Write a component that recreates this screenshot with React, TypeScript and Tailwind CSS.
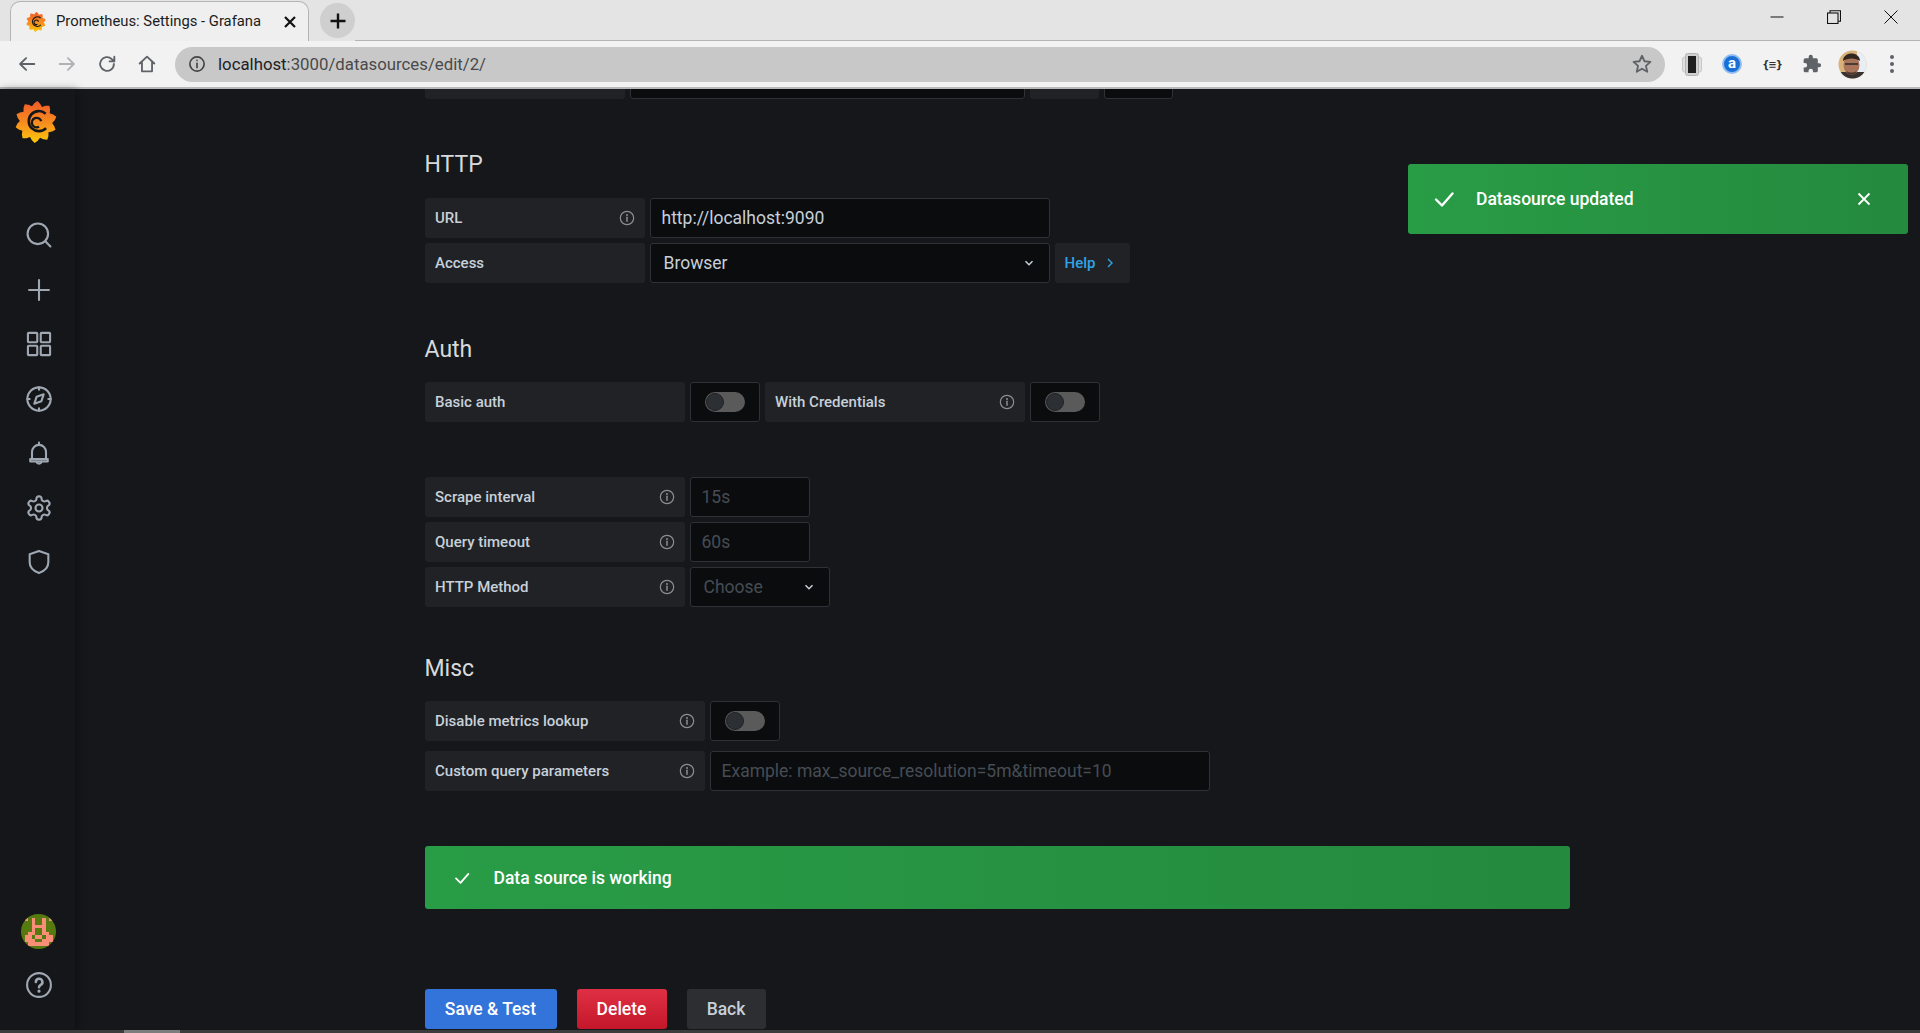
import React from "react";

const roboto = "font-['Roboto',sans-serif]";

function Logo({ size, id }: { size: number; id: string }) {
  const pts: string[] = [];
  const n = 10;
  for (let i = 0; i < n * 4; i++) {
    const a = (i / (n * 4)) * Math.PI * 2 - 0.25;
    const phase = i % 4;
    const r = phase === 0 ? 24 : phase === 1 || phase === 3 ? 21.5 : 18.5;
    pts.push(`${(24 + r * Math.cos(a)).toFixed(2)},${(24 + r * Math.sin(a)).toFixed(2)}`);
  }
  return (
    <svg width={size} height={size} viewBox="0 0 48 48">
      <defs>
        <linearGradient id={id} x1="0" y1="0" x2="0" y2="1">
          <stop offset="0" stopColor="#f05a28" />
          <stop offset="0.55" stopColor="#f7901e" />
          <stop offset="1" stopColor="#fbca0a" />
        </linearGradient>
      </defs>
      <polygon points={pts.join(" ")} fill={`url(#${id})`} />
      <path d="M35 14.5A11.5 11.5 0 1 0 35.5 31" fill="none" stroke="#141619" strokeWidth="3" />
      <path d="M30 23A5.5 5.5 0 1 0 27.5 29.5" fill="none" stroke="#141619" strokeWidth="2.6" />
    </svg>
  );
}

function Info() {
  return (
    <svg width="16" height="16" viewBox="0 0 24 24" fill="none" stroke="#8e8e8e" strokeWidth="1.8" strokeLinecap="round">
      <circle cx="12" cy="12" r="10" />
      <path d="M12 11v6" strokeWidth="2.2" />
      <circle cx="12" cy="7.5" r="0.6" fill="#8e8e8e" />
    </svg>
  );
}

function Chevron() {
  return (
    <svg width="12" height="12" viewBox="0 0 12 12" fill="none" stroke="#c7d0d9" strokeWidth="1.5">
      <path d="M2.5 4.2 6 7.7l3.5-3.5" />
    </svg>
  );
}

function Label({ text, info = true, w }: { text: string; info?: boolean; w: string }) {
  return (
    <div className={`${w} h-10 shrink-0 rounded-[3px] bg-[#202226] pl-[10.5px] pr-2.5 flex items-center justify-between text-[15px] font-medium text-[#c7d0d9]`}>
      <span>{text}</span>
      {info && <Info />}
    </div>
  );
}

function Box({ w, text, placeholder }: { w: string; text?: string; placeholder?: boolean }) {
  return (
    <div className={`${w} h-10 rounded-[3px] border border-[#2c3235] bg-[#0b0c0e] pl-[11px] flex items-center text-[17.5px] ${placeholder ? "text-[#464c54]" : "text-[#c7d0d9]"}`}>
      {text}
    </div>
  );
}

function Toggle() {
  return (
    <div className="w-[70px] h-10 rounded-[3px] border border-[#2c3235] bg-[#0b0c0e] flex items-center justify-center">
      <div className="w-10 h-5 rounded-full bg-[#5a5a5a] flex items-center">
        <div className="w-[18px] h-[18px] ml-px rounded-full bg-[#2c2f33] border border-[#202226]" />
      </div>
    </div>
  );
}

function Heading({ children, cls }: { children: React.ReactNode; cls: string }) {
  return <h3 className={`text-[23px] leading-[26px] font-normal text-[#d8d9da] ${cls}`}>{children}</h3>;
}

function Check({ size }: { size: number }) {
  return (
    <svg width={size} height={size} viewBox="0 0 24 24" fill="none" stroke="#fff" strokeWidth="2.4" strokeLinecap="round" strokeLinejoin="round">
      <path d="M4 12.5 10 18.5 20.5 6.5" />
    </svg>
  );
}

function NavIcons() {
  const common = { width: 28, height: 28, viewBox: "0 0 24 24", fill: "none", stroke: "#9fa7b3", strokeWidth: 1.8, strokeLinecap: "round" as const, strokeLinejoin: "round" as const };
  return (
    <div className="flex flex-col items-center gap-[26.5px] ml-[3px]">
      <svg {...common}><circle cx="11" cy="11" r="8.8" /><path d="m17.6 17.6 4.2 4.2" /></svg>
      <svg {...common}><path d="M12 3.5v17M3.5 12h17" /></svg>
      <svg {...common}><rect x="2.5" y="2.5" width="8" height="8" rx="0.6" /><rect x="13.5" y="2.5" width="8" height="8" rx="0.6" /><rect x="2.5" y="13.5" width="8" height="8" rx="0.6" /><rect x="13.5" y="13.5" width="8" height="8" rx="0.6" /></svg>
      <svg {...common}><circle cx="12" cy="12" r="10" /><path d="M16 8l-2 6-6 2 2-6z" /><path d="M12 2v2M12 20v2M2 12h2M20 12h2" /></svg>
      <svg {...common}><path d="M6 17V11a6 6 0 0 1 12 0v6" /><path d="M4.5 17.2h15v2h-15z" /><path d="M12 3v2" /><path d="M9.8 19.5a2.3 2.3 0 0 0 4.4 0" /></svg>
      <svg {...common}><path d="M12.22 2h-.44a2 2 0 0 0-2 2v.18a2 2 0 0 1-1 1.73l-.43.25a2 2 0 0 1-2 0l-.15-.08a2 2 0 0 0-2.73.73l-.22.38a2 2 0 0 0 .73 2.73l.15.1a2 2 0 0 1 1 1.72v.51a2 2 0 0 1-1 1.74l-.15.09a2 2 0 0 0-.73 2.73l.22.38a2 2 0 0 0 2.73.73l.15-.08a2 2 0 0 1 2 0l.43.25a2 2 0 0 1 1 1.73V20a2 2 0 0 0 2 2h.44a2 2 0 0 0 2-2v-.18a2 2 0 0 1 1-1.73l.43-.25a2 2 0 0 1 2 0l.15.08a2 2 0 0 0 2.73-.73l.22-.39a2 2 0 0 0-.73-2.73l-.15-.08a2 2 0 0 1-1-1.74v-.5a2 2 0 0 1 1-1.74l.15-.09a2 2 0 0 0 .73-2.73l-.22-.38a2 2 0 0 0-2.73-.73l-.15.08a2 2 0 0 1-2 0l-.43-.25a2 2 0 0 1-1-1.73V4a2 2 0 0 0-2-2z" /><circle cx="12" cy="12" r="3" /></svg>
      <svg {...common}><path d="M12 2.5l8 2.8v7c0 4.5-3 7.5-8 9.2-5-1.7-8-4.7-8-9.2v-7z" /></svg>
    </div>
  );
}

function Identicon() {
  const cells: [number, number[]][] = [
    [1, [1, 3, 6, 8]],
    [2, [3, 6]],
    [3, [3, 4, 5, 6]],
    [4, [3, 6]],
    [5, [2, 3, 6, 7]],
    [6, [1, 2, 4, 5, 7, 8]],
    [7, [1, 2, 3, 6, 7, 8]],
    [8, [2, 3, 4, 5, 6, 7]],
  ];
  return (
    <svg width="35" height="35" viewBox="0 0 10 10" className="rounded-full bg-[#567a10]" shapeRendering="crispEdges">
      {cells.map(([y, xs]) =>
        xs.map((x) => <rect key={`${x}-${y}`} x={x} y={y} width="1" height="1" fill="#f98e78" />)
      )}
    </svg>
  );
}

function ChromeIcon({ children }: { children: React.ReactNode }) {
  return (
    <svg width="22" height="22" viewBox="0 0 24 24" fill="none" stroke="#5f6368" strokeWidth="2" strokeLinecap="round" strokeLinejoin="round">
      {children}
    </svg>
  );
}

function Cell({ children }: { children: React.ReactNode }) {
  return <div className="w-10 h-[30px] flex items-center justify-center">{children}</div>;
}

export default function App() {
  return (
    <div className={`h-screen w-full flex flex-col overflow-hidden bg-[#141619] relative ${roboto}`}>
      {/* tab strip */}
      <div className="h-[41px] shrink-0 bg-[#e4e4e4] flex items-end relative">
        <div className="ml-[10px] w-[299px] h-10 bg-[#efefef] border border-b-0 border-[#b4b4b4] rounded-t-[10px] flex items-center pl-[15px] text-[#1c1c1c]">
          <Logo size={20} id="g-fav" />
          <span className="ml-[10px] w-[217px] whitespace-nowrap text-[14.8px]">Prometheus: Settings - Grafana</span>
          <svg width="14" height="14" viewBox="0 0 14 14" stroke="#111" strokeWidth="2.2" className="ml-[10px]"><path d="M2 2l10 10M12 2 2 12" /></svg>
        </div>
        <div className="ml-[11px] mb-[3px] w-[35px] h-[35px] rounded-full bg-[#cfcfcf] flex items-center justify-center">
          <svg width="18" height="18" viewBox="0 0 18 18" stroke="#111" strokeWidth="2.4"><path d="M9 1.5v15M1.5 9h15" /></svg>
        </div>
        <div className="flex-1 h-px bg-[#b4b4b4]" />
        <div className="absolute top-0 right-0 h-[34px] flex items-center pr-[22px] gap-[43px]">
          <svg width="14" height="14" viewBox="0 0 14 14" stroke="#111" strokeWidth="1"><path d="M0.5 7h13" /></svg>
          <svg width="14" height="14" viewBox="0 0 14 14" fill="none" stroke="#111" strokeWidth="1.1"><rect x="0.5" y="3" width="10.5" height="10.5" /><path d="M3 3V0.7h10.5v10.5H11" /></svg>
          <svg width="14" height="14" viewBox="0 0 14 14" stroke="#111" strokeWidth="1"><path d="M0.5 0.5l13 13M13.5 0.5l-13 13" /></svg>
        </div>
      </div>
      {/* toolbar */}
      <div className="h-[48px] shrink-0 bg-[#f2f2f2] border-b-2 border-[#b9b9b9] flex items-center">
        <div className="flex items-center ml-[16px] gap-[18px]">
          <ChromeIcon><path d="M20 12H5M11 5.5 4.5 12l6.5 6.5" /></ChromeIcon>
          <ChromeIcon><g stroke="#b0b2b5"><path d="M4 12h15M13 5.5l6.5 6.5-6.5 6.5" /></g></ChromeIcon>
          <ChromeIcon><path d="M19.5 12a7.5 7.5 0 1 1-2.3-5.4L20 9.2M20 4v5.2h-5.2" /></ChromeIcon>
          <ChromeIcon><path d="M4 11.5 12 4l8 7.5M6.5 10v10h11V10" /></ChromeIcon>
        </div>
        <div className="ml-[17px] w-[1490px] h-[35px] rounded-full bg-[#c8c8c8] flex items-center pl-[13px] pr-[12px]">
          <svg width="18" height="18" viewBox="0 0 24 24" fill="none" stroke="#444" strokeWidth="2.2" strokeLinecap="round"><circle cx="12" cy="12" r="9.5" /><path d="M12 11v6" /><path d="M12 7.2v.2" /></svg>
          <span className="ml-[12px] pt-[2px] text-[16.8px] text-[#202124] flex-1">
            localhost<span className="text-[#4a4a4a]">:3000/datasources/edit/2/</span>
          </span>
          <svg width="22" height="22" viewBox="0 0 24 24" fill="none" stroke="#5f6368" strokeWidth="2" strokeLinejoin="round"><path d="m12 3 2.7 6 6.5.7-4.9 4.4 1.4 6.4-5.7-3.3-5.7 3.3 1.4-6.4-4.9-4.4 6.5-.7z" /></svg>
        </div>
        <div className="flex items-center ml-[7px]">
          <Cell>
            <svg width="20" height="23" viewBox="0 0 20 23"><rect x="0.5" y="4" width="19" height="15" rx="2" fill="#e0e0e0" stroke="#c8c8c8" /><rect x="3.5" y="0.5" width="13" height="22" rx="2" fill="#d0d0d0" stroke="#b5b5b5" /><rect x="6" y="3" width="8" height="17" fill="#202020" /></svg>
          </Cell>
          <Cell>
            <div className="w-5 h-5 rounded-full bg-[#1a6fd6] border-2 border-[#8fbdf0] flex items-center justify-center text-white text-[15px] font-bold leading-none pb-[2px]">a</div>
          </Cell>
          <Cell>
            <span className="text-[10px] font-bold text-[#333] font-['DejaVu_Sans',sans-serif] tracking-[-1px]">{"{≡}"}</span>
          </Cell>
          <Cell>
            <svg width="20" height="20" viewBox="0 0 24 24" fill="#5f6368"><path d="M20.5 11H19V7a2 2 0 0 0-2-2h-4V3.5a2.5 2.5 0 0 0-5 0V5H4a2 2 0 0 0-2 2v3.8h1.5a2.7 2.7 0 0 1 0 5.4H2V20a2 2 0 0 0 2 2h3.8v-1.5a2.7 2.7 0 0 1 5.4 0V22H17a2 2 0 0 0 2-2v-4h1.5a2.5 2.5 0 0 0 0-5z" /></svg>
          </Cell>
          <Cell>
            <svg width="29" height="29" viewBox="0 0 29 29">
              <clipPath id="av"><circle cx="14.5" cy="14.5" r="14" /></clipPath>
              <g clipPath="url(#av)">
                <rect width="29" height="29" fill="#d9b27a" />
                <rect x="19" width="10" height="22" fill="#e8eef5" />
                <rect y="22" width="29" height="7" fill="#3a3230" />
                <ellipse cx="13.5" cy="15" rx="8" ry="10" fill="#a8745a" />
                <path d="M5 11C5 1 22 1 22 11 18 7.5 9 7.5 5 11z" fill="#33261e" />
                <path d="M7 14h13" stroke="#2a2a2a" strokeWidth="1.5" />
                <path d="M8.5 21c3 2 7 2 10 0-1 5-9 5-10 0z" fill="#4a3528" />
              </g>
            </svg>
          </Cell>
          <Cell>
            <svg width="6" height="20" viewBox="0 0 6 20" fill="#5f6368"><circle cx="3" cy="3" r="2" /><circle cx="3" cy="10" r="2" /><circle cx="3" cy="17" r="2" /></svg>
          </Cell>
        </div>
      </div>

      {/* body */}
      <div className="flex-1 min-h-0 flex">
        <aside className="w-[75px] shrink-0 bg-[#141619] shadow-[2px_0_8px_rgba(0,0,0,0.35)] flex flex-col items-center relative z-10">
          <div className="mt-[12px] -ml-[4px]"><Logo size={42} id="g-main" /></div>
          <div className="mt-[78px]"><NavIcons /></div>
          <div className="mt-auto mb-[34px] flex flex-col items-center gap-[22.5px] ml-[1px]">
            <Identicon />
            <svg width="28" height="28" viewBox="0 0 24 24" fill="none" stroke="#9fa7b3" strokeWidth="1.8" strokeLinecap="round" className="ml-[1px]">
              <circle cx="12" cy="12" r="10.2" />
              <path d="M9.3 9.5a2.8 2.8 0 1 1 4.2 2.4c-1 .6-1.5 1.1-1.5 2.1" strokeWidth="2.2" />
              <path d="M12 17.2v.1" strokeWidth="2.6" />
            </svg>
          </div>
        </aside>
        <main className="flex-1 min-w-0 overflow-hidden bg-[#15171b] pl-[349.5px] flex flex-col text-[#c7d0d9]">
          <div className="h-[10px] overflow-hidden flex items-end gap-[5px] shrink-0">
            <div className="w-[200px] h-10 rounded-[3px] bg-[#202226]" />
            <div className="w-[395px] h-10 rounded-[3px] border border-[#2c3235] bg-[#0b0c0e]" />
            <div className="w-[69px] h-10 rounded-[3px] bg-[#202226]" />
            <div className="w-[69px] h-10 rounded-[3px] border border-[#2c3235] bg-[#0b0c0e]" />
          </div>

          <Heading cls="mt-[53px]">HTTP</Heading>
          <div className="mt-[20px] flex gap-[5px]">
            <Label text="URL" w="w-[220px]" />
            <Box w="w-[400px]" text="http://localhost:9090" />
          </div>
          <div className="mt-[5px] flex gap-[5px]">
            <Label text="Access" info={false} w="w-[220px]" />
            <div className="w-[400px] h-10 rounded-[3px] border border-[#2c3235] bg-[#0b0c0e] pl-[13px] pr-[14px] flex items-center justify-between text-[17.5px]">
              <span className="pt-px">Browser</span>
              <Chevron />
            </div>
            <div className="w-[75px] h-10 rounded-[3px] bg-[#202226] pl-[10px] flex items-center gap-[11px] text-[15px] font-medium text-[#33a2e5]">
              Help
              <svg width="8" height="12" viewBox="0 0 8 12" fill="none" stroke="#33a2e5" strokeWidth="1.4"><path d="M2 2l4 4-4 4" /></svg>
            </div>
          </div>

          <Heading cls="mt-[54px]">Auth</Heading>
          <div className="mt-[19px] flex gap-[5px]">
            <Label text="Basic auth" info={false} w="w-[260px]" />
            <Toggle />
            <Label text="With Credentials" w="w-[260px]" />
            <Toggle />
          </div>

          <div className="mt-[55px] flex gap-[5px]">
            <Label text="Scrape interval" w="w-[260px]" />
            <Box w="w-[120px]" text="15s" placeholder />
          </div>
          <div className="mt-[5px] flex gap-[5px]">
            <Label text="Query timeout" w="w-[260px]" />
            <Box w="w-[120px]" text="60s" placeholder />
          </div>
          <div className="mt-[5px] flex gap-[5px]">
            <Label text="HTTP Method" w="w-[260px]" />
            <div className="w-[140px] h-10 rounded-[3px] border border-[#2c3235] bg-[#0b0c0e] pl-[13px] pr-[14px] flex items-center justify-between text-[17.5px] text-[#464c54]">
              <span className="pt-px">Choose</span>
              <Chevron />
            </div>
          </div>

          <Heading cls="mt-[49px]">Misc</Heading>
          <div className="mt-[19px] flex gap-[5px]">
            <Label text="Disable metrics lookup" w="w-[280px]" />
            <Toggle />
          </div>
          <div className="mt-[10px] flex gap-[5px]">
            <Label text="Custom query parameters" w="w-[280px]" />
            <Box w="w-[500px]" text="Example: max_source_resolution=5m&timeout=10" placeholder />
          </div>

          <div className="mt-[55px] w-[1145px] h-[63px] shrink-0 rounded-[3px] bg-gradient-to-r from-[#299c46] to-[#248a3e] flex items-center pl-[28px] text-[17.5px] font-medium text-white">
            <Check size={18} />
            <span className="ml-[23px] pt-px">Data source is working</span>
          </div>

          <div className="mt-[80px] flex gap-5 text-[17.5px] font-medium shrink-0">
            <button className="w-[132px] h-10 rounded-[3px] bg-[#3274d9] text-white">Save &amp; Test</button>
            <button className="w-[90px] h-10 rounded-[3px] bg-gradient-to-b from-[#e02f44] to-[#c4162a] text-white">Delete</button>
            <button className="w-[79px] h-10 rounded-[3px] bg-[#2d2e32] text-[#c7d0d9]">Back</button>
          </div>
        </main>
      </div>

      {/* scrollbar strip */}
      <div className="absolute left-0 right-0 bottom-0 h-[3px] bg-[#3c3c3c] z-20">
        <div className="ml-[124px] w-[56px] h-full bg-[#7d7d7d]" />
      </div>

      {/* toast */}
      <div className="absolute left-[1408px] top-[164px] w-[500px] h-[70px] rounded-[3px] bg-gradient-to-r from-[#299c46] to-[#248a3e] flex items-center pl-[24px] pr-[37px] text-[17.5px] font-medium text-white z-30">
        <Check size={24} />
        <span className="ml-[20px] flex-1">Datasource updated</span>
        <svg width="14" height="14" viewBox="0 0 14 14" stroke="#fff" strokeWidth="1.8"><path d="M1.5 1.5l11 11M12.5 1.5l-11 11" /></svg>
      </div>
    </div>
  );
}
